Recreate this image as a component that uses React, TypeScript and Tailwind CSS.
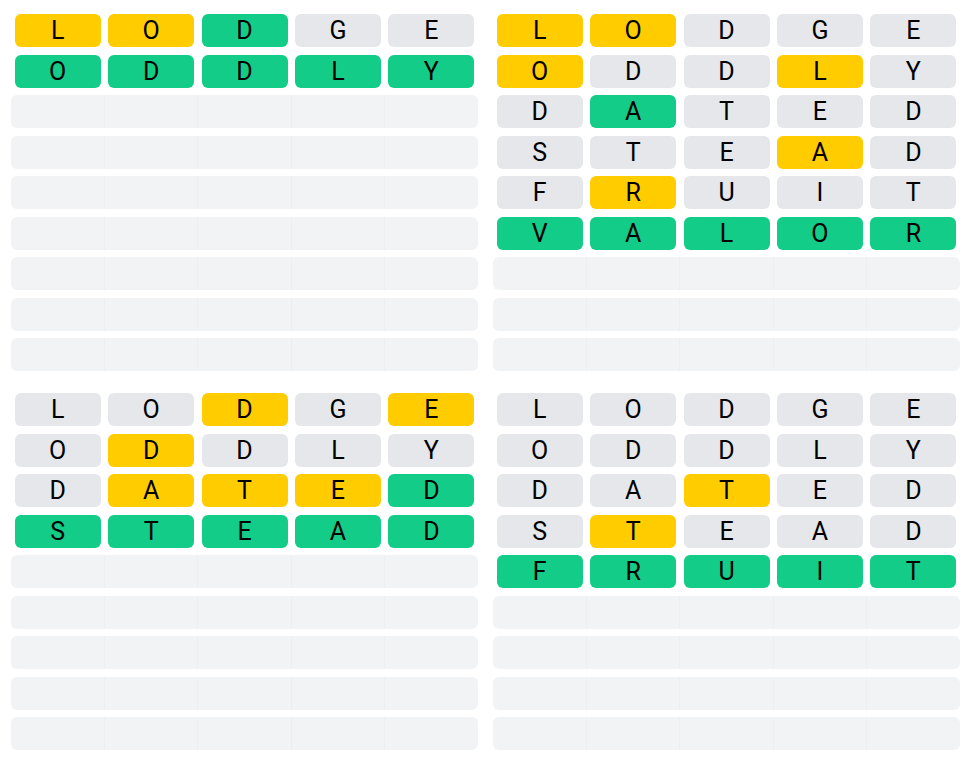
import React from "react";

type C = "y" | "g" | "n";
type Row = { w: string; c: C[] };

const boards: Row[][] = [
  [
    { w: "LODGE", c: ["y", "y", "g", "n", "n"] },
    { w: "ODDLY", c: ["g", "g", "g", "g", "g"] },
  ],
  [
    { w: "LODGE", c: ["y", "y", "n", "n", "n"] },
    { w: "ODDLY", c: ["y", "n", "n", "y", "n"] },
    { w: "DATED", c: ["n", "g", "n", "n", "n"] },
    { w: "STEAD", c: ["n", "n", "n", "y", "n"] },
    { w: "FRUIT", c: ["n", "y", "n", "n", "n"] },
    { w: "VALOR", c: ["g", "g", "g", "g", "g"] },
  ],
  [
    { w: "LODGE", c: ["n", "n", "y", "n", "y"] },
    { w: "ODDLY", c: ["n", "y", "n", "n", "n"] },
    { w: "DATED", c: ["n", "y", "y", "y", "g"] },
    { w: "STEAD", c: ["g", "g", "g", "g", "g"] },
  ],
  [
    { w: "LODGE", c: ["n", "n", "n", "n", "n"] },
    { w: "ODDLY", c: ["n", "n", "n", "n", "n"] },
    { w: "DATED", c: ["n", "n", "y", "n", "n"] },
    { w: "STEAD", c: ["n", "y", "n", "n", "n"] },
    { w: "FRUIT", c: ["g", "g", "g", "g", "g"] },
  ],
];

function Tile({ ch, c }: { ch: string; c: C }) {
  const bg = c === "y" ? "bg-[#ffcc00]" : c === "g" ? "bg-[#13cc88]" : "bg-[#e5e7eb]";
  return (
    <div className="flex-1 px-[3.7px]">
      <div className={`${bg} h-full rounded-md flex items-center justify-center text-[25px] leading-none text-black`}>
        {ch}
      </div>
    </div>
  );
}

function FilledRow({ r }: { r: Row }) {
  return (
    <div className="flex h-[33px]">
      {r.w.split("").map((ch, i) => (
        <Tile key={i} ch={ch} c={r.c[i]} />
      ))}
    </div>
  );
}

function EmptyRow() {
  return (
    <div className="flex h-[33px] rounded-md bg-[#f2f3f5] overflow-hidden">
      <div className="flex-1" />
      <div className="flex-1 border-l border-[#eceef0]" />
      <div className="flex-1 border-l border-[#eceef0]" />
      <div className="flex-1 border-l border-[#eceef0]" />
      <div className="flex-1 border-l border-[#eceef0]" />
    </div>
  );
}

function Board({ rows }: { rows: Row[] }) {
  const empties = 9 - rows.length;
  return (
    <div className="flex flex-col gap-[7.5px]">
      {rows.map((r, i) => (
        <FilledRow key={i} r={r} />
      ))}
      {Array.from({ length: empties }).map((_, i) => (
        <EmptyRow key={"e" + i} />
      ))}
    </div>
  );
}

export default function App() {
  return (
    <div
      className="w-[980px] h-[768px] bg-white pl-[11px] pt-[14px]"
      style={{ fontFamily: "Roboto, 'Noto Sans', sans-serif" }}
    >
      <div className="grid grid-cols-[467px_467px] gap-x-[15px] gap-y-[22px]">
        {boards.map((b, i) => (
          <Board key={i} rows={b} />
        ))}
      </div>
    </div>
  );
}
